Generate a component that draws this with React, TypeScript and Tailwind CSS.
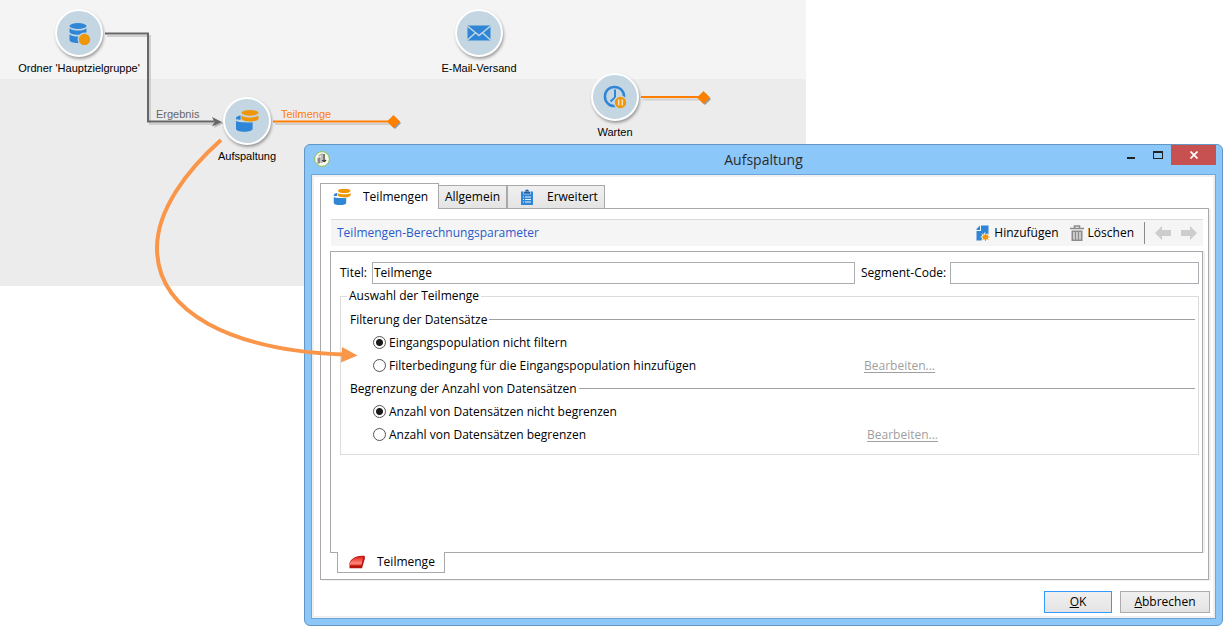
import { useState } from 'react';
import type { ReactNode } from 'react';

function SplitIcon({ className }: { className?: string }) {
  return (
    <svg viewBox="0 0 24 24" className={className} aria-hidden="true">
      <path d="M1 10.300V9.200C1 7.800 3 6.900 5.600 6.600v4.200c-2 0-3.600-.2-4.600-.5z" fill="#2f86d6" />
      <path d="M1 12c1.800 1 4.500 1.300 8 1.300 3.400 0 6.200.6 8.600 0V20c0 1.600-3.700 2.800-8.300 2.800S1 21.600 1 20z" fill="#2f86d6" />
      <ellipse cx="15" cy="3.800" rx="8.500" ry="2.900" fill="#f09609" />
      <path d="M6.500 6.500c1.500 1.300 4.800 1.900 8.500 1.900s7-.6 8.500-1.900v3.300c0 1.600-3.800 2.700-8.500 2.700s-8.500-1.100-8.500-2.700z" fill="#f09609" />
    </svg>
  );
}

function DatabaseIcon() {
  return (
    <svg viewBox="0 0 24 24" className="size-6" aria-hidden="true">
      <ellipse cx="11" cy="5" rx="8.500" ry="3" fill="#2f86d6" />
      <path d="M2.500 7.300c1.500 1.500 4.600 2.300 8.500 2.300s7-.8 8.500-2.300v3.500c0 1.700-3.800 3-8.500 3s-8.500-1.300-8.500-3z" fill="#2f86d6" />
      <path d="M2.500 13.300c1.500 1.500 4.600 2.300 8.500 2.300s7-.8 8.500-2.300V19c0 1.700-3.800 3-8.500 3s-8.500-1.300-8.500-3z" fill="#2f86d6" />
      <circle cx="17.500" cy="18.500" r="6.300" fill="#f09609" stroke="#c4d6e2" strokeWidth="1.200" />
    </svg>
  );
}

function MailIcon() {
  return (
    <svg viewBox="0 0 24 24" className="size-6" aria-hidden="true">
      <path d="M.5 4.500h23v15H.5z" fill="#2f86d6" />
      <path d="M.5 5l8 6.700L12 14.500l3.500-2.800 8-6.700M.5 19l8-7.300M23.500 19l-8-7.300" fill="none" stroke="#c4d6e2" strokeWidth="1.500" />
    </svg>
  );
}

function WaitIcon() {
  return (
    <svg viewBox="0 0 24 24" className="size-6" aria-hidden="true">
      <circle cx="11.500" cy="11.500" r="9.600" fill="none" stroke="#2f86d6" strokeWidth="2.500" />
      <path d="M12 4.500v8l-4.500 4" fill="none" stroke="#2f86d6" strokeWidth="2" />
      <circle cx="17.500" cy="17.500" r="6.300" fill="#f09609" stroke="#c4d6e2" strokeWidth="1.300" />
      <path d="M15.700 14.500v6M19.300 14.500v6" stroke="#f7e3bd" strokeWidth="1.500" />
    </svg>
  );
}

function ClipboardIcon() {
  return (
    <svg viewBox="0 0 16 16" className="size-4" aria-hidden="true">
      <path d="M2 2.500h12V16H2z" fill="#2f86d6" />
      <path d="M4.500 2.500h7V5h-7z" fill="#1d5d9c" stroke="#fff" strokeWidth=".5" />
      <path d="M6 2.500a2 2 0 0 1 4 0z" fill="#1d5d9c" />
      <path d="M4 8h1M4 10.500h1M4 13h1M6 8h6M6 10.500h6M6 13h6" stroke="#e6f1fb" strokeWidth="1" />
    </svg>
  );
}

function AddIcon() {
  return (
    <svg viewBox="0 0 16 16" className="size-4" aria-hidden="true">
      <path d="M6 .5h7.500V9H9l-2.500 6.500H1.500V6H6z" fill="#2f86d6" />
      <path d="M5 .5V5H1.500V4z" fill="#2f86d6" />
      <path d="M10 7l1.100 2.100 2.300-.7-.6 2.300 2.200 1.300-2.200 1.200.6 2.300-2.300-.7L10 16l-1.100-1.700-2.300.7.6-2.300L5 12l2.200-1.300-.6-2.300 2.300.7z" fill="#f5f5f5" />
      <circle cx="10.500" cy="12" r="2.600" fill="#f09609" />
      <path d="M10.500 8v8M6.500 12h8M7.700 9.200l5.600 5.600M13.300 9.200l-5.600 5.600" stroke="#f09609" strokeWidth="1" />
    </svg>
  );
}

function TrashIcon() {
  return (
    <svg viewBox="0 0 16 16" className="size-4" aria-hidden="true">
      <path d="M1 3.500h14M5.500 3V1h5v2" stroke="#8c8c8c" strokeWidth="1.500" fill="none" />
      <path d="M2.500 5.500h11V16h-11z" fill="#8c8c8c" />
      <path d="M5 7v7.500M8 7v7.500M11 7v7.500" stroke="#f4f4f4" strokeWidth="1.200" />
    </svg>
  );
}

function SegmentIcon() {
  return (
    <svg viewBox="0 0 16 14" className="h-3.5 w-4" aria-hidden="true">
      <defs>
        <linearGradient id="segment-top" x1="0" y1="0" x2="0" y2="1">
          <stop offset="0" stopColor="#e01a10" />
          <stop offset=".75" stopColor="#ff8a80" />
          <stop offset="1" stopColor="#e8392c" />
        </linearGradient>
      </defs>
      <path d="M.5 8C2 3.500 8 0 15.800 1v2.700L13 13.200H.5z" fill="#b3140c" />
      <path d="M1 8C2.600 3.800 8 .9 14.500 1.500L12.300 10.500H1z" fill="url(#segment-top)" />
    </svg>
  );
}

function ArrowIcon({ flip }: { flip?: boolean }) {
  return (
    <svg viewBox="0 0 16 14" className={flip ? 'h-3.5 w-4 rotate-180' : 'h-3.5 w-4'} aria-hidden="true">
      <path d="M0 7l7-7v4h9v6H7v4z" fill="#cdcdcd" />
    </svg>
  );
}

function AppIcon() {
  return (
    <svg viewBox="0 0 16 16" className="size-4" aria-hidden="true">
      <circle cx="8" cy="8" r="7.400" fill="#f7f7ee" stroke="#8cc04a" strokeWidth="1" />
      <path d="M3.500 7L6.500 6v6l-3 1z" fill="#8b8b8b" />
      <path d="M4.500 5l3.500-2v9" stroke="#a5a5a5" strokeWidth="1.300" fill="none" />
      <path d="M10 3v7M8 9.500l2.500 1 1.500-1.500" stroke="#333" strokeWidth="1.300" fill="none" />
    </svg>
  );
}

function Node({ place, label, children }: { place: string; label: string; children: ReactNode }) {
  return (
    <div className={`absolute flex w-32 flex-col items-center gap-[3px] ${place}`}>
      <div className="flex size-12 items-center justify-center rounded-full border-2 border-white bg-[#c4d6e2] shadow-[1px_2px_3px_rgba(0,0,0,0.35)]">
        {children}
      </div>
      <span className="text-[11px] leading-4 whitespace-nowrap text-black">{label}</span>
    </div>
  );
}

function Connectors() {
  return (
    <svg className="pointer-events-none absolute top-0 left-0" width="806" height="286" aria-hidden="true">
      <g fill="none" strokeWidth="2">
        <path d="M107 36h43v88h66" stroke="#d0d0d0" />
        <path d="M105 33.500h43v88h66" stroke="#666" />
        <path d="M275 124h118M643 99.500h58" stroke="#d0d0d0" />
        <path d="M273 121.500h118M641 97h60" stroke="#ff7f00" />
      </g>
      <path d="M214 119l10 4-10 5 2-5z" fill="#bbb" />
      <path d="M212 117l10 5-10 4.500 2.500-4.500z" fill="#666" />
      <path d="M389 123l6-6 6 6-6 6zM699 99l6-6 6 6-6 6z" fill="#999" />
      <path d="M387 121.500l6.500-6.500 6.500 6.500-6.500 6.500zM697 97.500l6.500-6.500 6.500 6.500-6.500 6.500z" fill="#ff7f00" />
    </svg>
  );
}

function SectionHead({ children }: { children: ReactNode }) {
  return (
    <div className="flex h-[23px] items-center gap-0.5 pr-[3px] pl-[9px]">
      <span>{children}</span>
      <span className="h-px flex-1 bg-[#a0a0a0]" />
    </div>
  );
}

function Choice({ name, label, checked, onPick, edit, width }: {
  name: string;
  label: string;
  checked: boolean;
  onPick: () => void;
  edit?: boolean;
  width: string;
}) {
  return (
    <div className="flex h-[23px] items-center pl-8">
      <label className={`flex items-center gap-[3px] ${width}`}>
        <input
          type="radio"
          name={name}
          checked={checked}
          onChange={onPick}
          className="size-[13px] appearance-none rounded-full border border-[#555] bg-white checked:bg-[radial-gradient(circle,#1a1a1a_0_3px,#fff_4px)]"
        />
        {label}
      </label>
      {edit && <a href="#bearbeiten" className="text-[#a0a0a0] underline underline-offset-2">Bearbeiten...</a>}
    </div>
  );
}

function SplitDialog() {
  const [title, setTitle] = useState('Teilmenge');
  const [code, setCode] = useState('');
  const [filter, setFilter] = useState(false);
  const [limit, setLimit] = useState(false);
  const field = 'h-[22px] border border-[#abadb3] bg-white px-px pb-0.5 outline-none';

  return (
    <div role="dialog" aria-labelledby="dialog-title" className="absolute top-[144px] right-px left-[304px] rounded-md border border-[#6496c4] bg-[#8cc7f9] px-1.5 pb-1.5 font-['Open_Sans','Noto_Sans',sans-serif] text-[12px] leading-4 text-black">
      <header className="grid h-[29px] grid-cols-[1fr_auto_1fr] items-start">
        <div className="pt-1.5 pl-[3px]"><AppIcon /></div>
        <h1 id="dialog-title" className="pt-[5px] text-[14px] leading-5 text-[#2b2b2b]">Aufspaltung</h1>
        <div className="flex justify-end">
          <button type="button" aria-label="Minimieren" className="flex h-5 w-[27px] items-end justify-center pb-1.5"><span className="h-0.5 w-2 bg-[#222]" /></button>
          <button type="button" aria-label="Maximieren" className="flex h-5 w-[27px] items-center justify-center"><span className="h-2 w-2.5 border border-t-2 border-[#222]" /></button>
          <button type="button" aria-label="Schließen" className="flex h-5 w-[45px] items-center justify-center bg-[#c75050]">
            <svg viewBox="0 0 8 8" className="size-2"><path d="M.5.5l7 7M7.500.5l-7 7" stroke="#fff" strokeWidth="1.700" /></svg>
          </button>
        </div>
      </header>

      <div className="border border-[#6ea6dc] bg-white pt-2 pb-[5px] pl-2 shadow-[inset_0_0_0_2px_#f0f0f0]">
        <div role="tablist" className="relative -mb-px flex items-end">
          <button type="button" role="tab" aria-selected="true" className="flex h-[26px] w-[119px] items-center border border-b-0 border-[#a9a9a9] bg-white pl-3">
            <SplitIcon className="size-[18px]" />
            <span className="pl-3">Teilmengen</span>
          </button>
          <button type="button" role="tab" aria-selected="false" className="h-6 w-[68px] border border-l-0 border-[#a9a9a9] bg-linear-to-b from-[#f0f0f0] to-[#e4e4e4]">Allgemein</button>
          <button type="button" role="tab" aria-selected="false" className="flex h-6 w-[98px] items-center gap-3 border border-[#a9a9a9] bg-linear-to-b from-[#f0f0f0] to-[#e4e4e4] pl-[11px]">
            <ClipboardIcon />
            Erweitert
          </button>
        </div>

        <div className="mr-1.5 border border-[#a9a9a9] pt-2.5 pr-[5px] pb-1.5 pl-[9px] shadow-[2px_1px_0_#f0f0f0]">
          <div className="ml-px flex h-[27px] items-center border-t border-[#dadada] bg-[#f5f5f5] px-1.5">
            <h2 className="flex-1 text-[#2a5bc8]">Teilmengen-Berechnungsparameter</h2>
            <button type="button" className="flex items-center gap-[3px]"><AddIcon />Hinzufügen</button>
            <button type="button" className="ml-2.5 flex items-center gap-[3px]"><TrashIcon />Löschen</button>
            <span className="mx-2.5 h-[22px] w-px bg-[#8a8a8a]" />
            <button type="button" aria-label="Zurück"><ArrowIcon /></button>
            <button type="button" aria-label="Weiter" className="ml-2.5"><ArrowIcon flip /></button>
          </div>

          <div className="mt-[5px] min-h-[302px] border border-[#a9a9a9] pt-2.5 pr-[3px] pl-[9px] shadow-[2px_0_0_#f0f0f0]">
            <div className="flex items-center">
              <label htmlFor="titel" className="w-8">Titel:</label>
              <input id="titel" value={title} onChange={(e) => setTitle(e.target.value)} className={`min-w-0 flex-1 ${field}`} />
              <label htmlFor="segment" className="w-[95px] pl-1.5 whitespace-nowrap">Segment-Code:</label>
              <input id="segment" value={code} onChange={(e) => setCode(e.target.value)} className={`w-[249px] ${field}`} />
            </div>

            <fieldset className="mt-1 border border-[#dcdcdc] pt-1 pb-2">
              <legend className="ml-1.5 px-0.5">Auswahl der Teilmenge</legend>
              <SectionHead>Filterung der Datensätze</SectionHead>
              <Choice name="filter" width="w-[491px]" label="Eingangspopulation nicht filtern" checked={!filter} onPick={() => setFilter(false)} />
              <Choice name="filter" width="w-[491px]" label="Filterbedingung für die Eingangspopulation hinzufügen" checked={filter} onPick={() => setFilter(true)} edit />
              <SectionHead>Begrenzung der Anzahl von Datensätzen</SectionHead>
              <Choice name="limit" width="w-[494px]" label="Anzahl von Datensätzen nicht begrenzen" checked={!limit} onPick={() => setLimit(false)} />
              <Choice name="limit" width="w-[494px]" label="Anzahl von Datensätzen begrenzen" checked={limit} onPick={() => setLimit(true)} edit />
            </fieldset>
          </div>

          <button type="button" className="relative -mt-px ml-[7px] flex h-[21px] w-[108px] items-center gap-3 border border-t-0 border-[#a9a9a9] bg-white pl-[11px]">
            <SegmentIcon />
            Teilmenge
          </button>
        </div>

        <div className="mt-[11px] flex justify-end gap-2 pr-[5px]">
          <button type="button" className="h-[22px] w-[68px] border border-[#3399ff] bg-linear-to-b from-[#f0f0f0] to-[#e4e4e4]"><u>O</u>K</button>
          <button type="button" className="h-[22px] w-[90px] border border-[#acacac] bg-linear-to-b from-[#f0f0f0] to-[#e4e4e4]"><u>A</u>bbrechen</button>
        </div>
      </div>
    </div>
  );
}

export default function App() {
  return (
    <main className="relative min-h-screen overflow-hidden bg-white font-['Liberation_Sans',Arial,sans-serif]">
      <div className="relative max-w-[806px]">
        <div className="h-[79px] bg-[#f4f4f4]" />
        <div className="h-[207px] bg-[#ececec]" />
        <Connectors />
        <Node place="left-[15px] top-[9px]" label="Ordner 'Hauptzielgruppe'"><DatabaseIcon /></Node>
        <Node place="left-[415px] top-[9px]" label="E-Mail-Versand"><MailIcon /></Node>
        <Node place="left-[183px] top-[97px]" label="Aufspaltung"><SplitIcon className="size-6" /></Node>
        <Node place="left-[551px] top-[73px]" label="Warten"><WaitIcon /></Node>
        <span className="absolute top-[106px] left-[156px] text-[11px] leading-4 text-[#666]">Ergebnis</span>
        <span className="absolute top-[106px] left-[281px] text-[11px] leading-4 text-[#ff7f00]">Teilmenge</span>
      </div>
      <SplitDialog />
      <svg className="pointer-events-none absolute top-0 left-0" width="370" height="370" aria-hidden="true">
        <path d="M221 140C187 170 157 210 157 248C157 313 232 350 343 354.500" fill="none" stroke="#f9964a" strokeWidth="4" />
        <path d="M342 347l15.500 8.500-16.500 7z" fill="#f9964a" />
      </svg>
    </main>
  );
}
